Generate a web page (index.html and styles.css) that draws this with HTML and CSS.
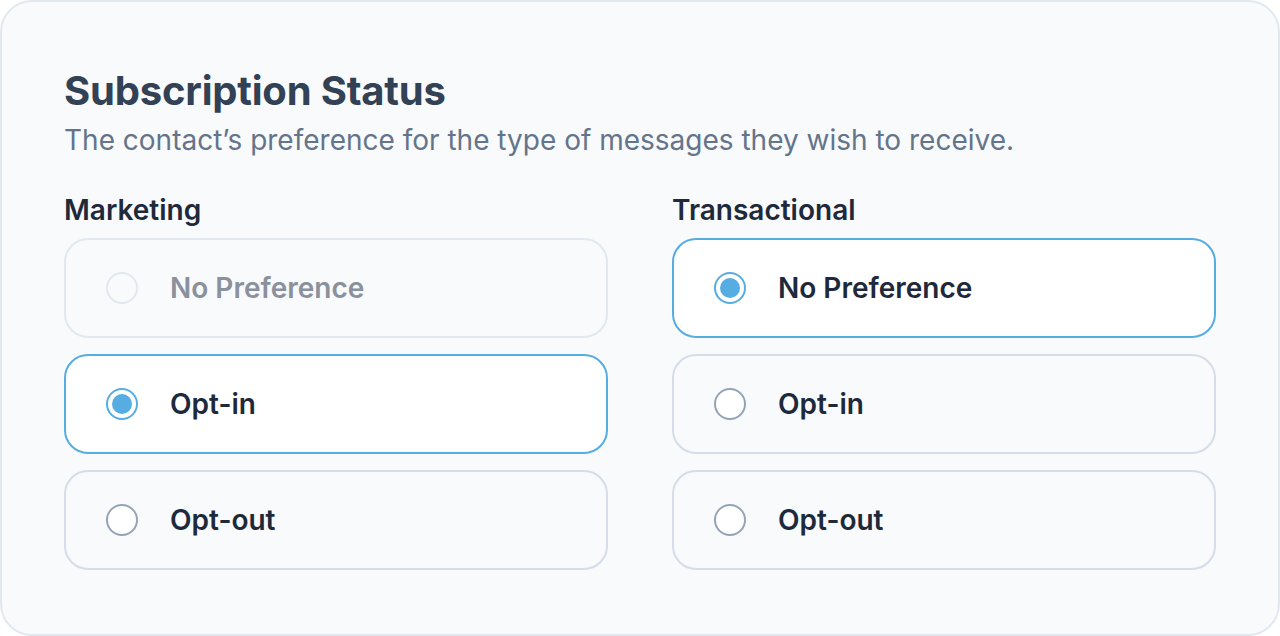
FILE: index.html
```html
<!DOCTYPE html>
<html lang="en">
<head>
<meta charset="utf-8">
<title>Subscription Status</title>
<link rel="stylesheet" href="styles.css">
</head>
<body>
<section class="card">
  <header class="card-head">
    <h1 class="title">Subscription Status</h1>
    <p class="desc">The contact’s preference for the type of messages they wish to receive.</p>
  </header>
  <div class="groups">
    <fieldset class="group">
      <legend class="group-label">Marketing</legend>
      <div class="options">
        <label class="option is-disabled"><span class="radio"></span><span class="option-text">No Preference</span></label>
        <label class="option is-checked"><span class="radio"></span><span class="option-text">Opt-in</span></label>
        <label class="option"><span class="radio"></span><span class="option-text">Opt-out</span></label>
      </div>
    </fieldset>
    <fieldset class="group">
      <legend class="group-label">Transactional</legend>
      <div class="options">
        <label class="option is-checked"><span class="radio"></span><span class="option-text">No Preference</span></label>
        <label class="option"><span class="radio"></span><span class="option-text">Opt-in</span></label>
        <label class="option"><span class="radio"></span><span class="option-text">Opt-out</span></label>
      </div>
    </fieldset>
  </div>
</section>
</body>
</html>
```

FILE: styles.css
```css
* { box-sizing: border-box; }
html, body {
  margin: 0;
  padding: 0;
  background: #ffffff;
}
body {
  font-family: Inter, "Noto Sans", "Liberation Sans", sans-serif;
  -webkit-font-smoothing: antialiased;
}
.card {
  width: 1280px;
  height: 636px;
  border: 2px solid #e2e8f0;
  border-radius: 32px;
  background: #f8fafc;
  padding: 62px 62px 64px;
  display: flex;
  flex-direction: column;
}
.card-head {
  margin-bottom: 30px;
}
.title {
  margin: 0;
  font-size: 40px;
  line-height: 54px;
  font-weight: 700;
  color: #334155;
  letter-spacing: -0.2px;
}
.desc {
  margin: 2px 0 0;
  font-size: 28px;
  line-height: 40px;
  color: #64748b;
  font-weight: 400;
}
.groups {
  display: grid;
  grid-template-columns: 1fr 1fr;
  column-gap: 64px;
}
.group {
  border: 0;
  margin: 0;
  padding: 0;
  min-width: 0;
}
.group-label {
  padding: 0;
  margin: 0 0 8px;
  font-size: 28px;
  line-height: 40px;
  font-weight: 600;
  color: #1e293b;
  float: left;
  width: 100%;
}
.options {
  clear: both;
  display: flex;
  flex-direction: column;
  gap: 16px;
}
.option {
  display: flex;
  align-items: center;
  gap: 32px;
  height: 100px;
  padding: 0 40px;
  border: 2px solid #d5dde8;
  border-radius: 24px;
  background: #f8fafc;
}
.option-text {
  font-size: 28px;
  line-height: 40px;
  font-weight: 600;
  color: #1e293b;
}
.radio {
  flex: none;
  width: 32px;
  height: 32px;
  border-radius: 50%;
  border: 2px solid #94a3b8;
  background: #ffffff;
  display: flex;
  align-items: center;
  justify-content: center;
}
.option.is-checked {
  background: #ffffff;
  border-color: #56ade2;
}
.option.is-checked .radio {
  border-color: #56ade2;
}
.option.is-checked .radio::after {
  content: "";
  width: 20px;
  height: 20px;
  border-radius: 50%;
  background: #56ade2;
}
.option.is-disabled {
  border-color: #e2e8f0;
}
.option.is-disabled .radio {
  border-color: #e2e8f0;
  background: #f8fafc;
}
.option.is-disabled .option-text {
  color: #8a919c;
}
```
